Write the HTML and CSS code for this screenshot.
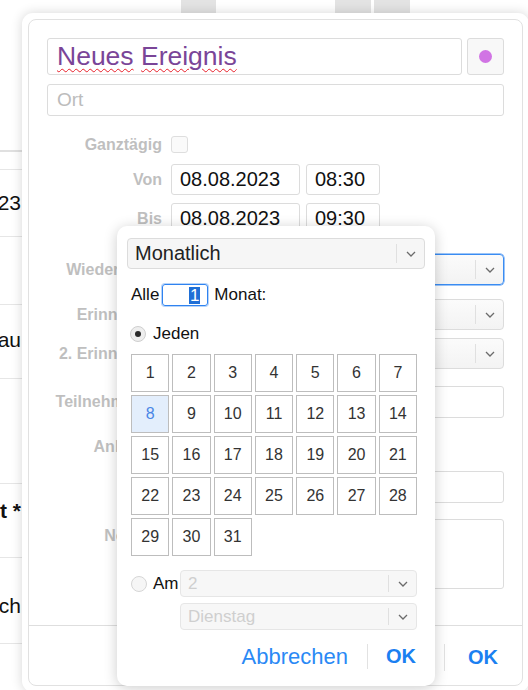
FILE: index.html
```html
<!DOCTYPE html>
<html lang="de">
<head>
<meta charset="utf-8">
<title>Neues Ereignis</title>
<link rel="stylesheet" href="styles.css">
</head>
<body>
<div class="desk">
  <div class="topbar">
    <div class="tab tab-a"></div>
    <div class="tab tab-b"></div>
    <div class="tab tab-c"></div>
  </div>
  <div class="list">
    <div class="list-head"></div>
    <div class="lrow r1"></div>
    <div class="lrow r2"><span>08.08.2023</span></div>
    <div class="lrow r3"></div>
    <div class="lrow r4"><span>Genau</span></div>
    <div class="lrow r5"></div>
    <div class="lrow r6"><span class="strong">Inhalt *</span></div>
    <div class="lrow r7"><span>Deutsch</span></div>
  </div>
</div>

<div class="dialog">
  <div class="panel">
    <div class="pbody">
      <div class="titlerow">
        <div class="title-input"><span class="spell">Neues</span> <span class="spell">Ereignis</span></div>
        <div class="color-btn"><span class="dot"></span></div>
      </div>
      <div class="ort-input">Ort</div>

      <div class="frow row-allday">
        <div class="flabel">Ganztägig</div>
        <div class="fctrl"><span class="checkbox"></span></div>
      </div>
      <div class="frow row-von">
        <div class="flabel">Von</div>
        <div class="fctrl">
          <div class="inp date">08.08.2023</div>
          <div class="inp time">08:30</div>
        </div>
      </div>
      <div class="frow row-bis">
        <div class="flabel">Bis</div>
        <div class="fctrl">
          <div class="inp date">08.08.2023</div>
          <div class="inp time">09:30</div>
        </div>
      </div>
      <div class="frow row-rep">
        <div class="flabel">Wiederholen</div>
        <div class="fctrl">
          <div class="msel focus"><span class="msel-text">Monatlich</span><span class="msel-btn"><svg width="10" height="6" viewBox="0 0 10 6"><polyline points="1,1 5,5 9,1" fill="none" stroke="#6b6b6b" stroke-width="1.3"/></svg></span></div>
        </div>
      </div>
      <div class="frow row-rem1">
        <div class="flabel">Erinnerung</div>
        <div class="fctrl">
          <div class="msel"><span class="msel-text">Keine</span><span class="msel-btn"><svg width="10" height="6" viewBox="0 0 10 6"><polyline points="1,1 5,5 9,1" fill="none" stroke="#6b6b6b" stroke-width="1.3"/></svg></span></div>
        </div>
      </div>
      <div class="frow row-rem2">
        <div class="flabel">2. Erinnerung</div>
        <div class="fctrl">
          <div class="msel"><span class="msel-text">Keine</span><span class="msel-btn"><svg width="10" height="6" viewBox="0 0 10 6"><polyline points="1,1 5,5 9,1" fill="none" stroke="#6b6b6b" stroke-width="1.3"/></svg></span></div>
        </div>
      </div>
      <div class="frow row-part">
        <div class="flabel">Teilnehmende</div>
        <div class="fctrl"><div class="inp wide"></div></div>
      </div>
      <div class="frow row-att">
        <div class="flabel">Anhänge</div>
        <div class="fctrl"><div class="attbtn">Hinzufügen</div></div>
      </div>
      <div class="frow row-url">
        <div class="flabel"></div>
        <div class="fctrl"><div class="inp wide"></div></div>
      </div>
      <div class="frow row-notes">
        <div class="flabel">Notizen</div>
        <div class="fctrl"><div class="textarea"></div></div>
      </div>
    </div>
    <div class="pfoot">
      <span class="btn">Abbrechen</span>
      <span class="sep"></span>
      <span class="btn ok">OK</span>
    </div>
  </div>
</div>

<div class="popup">
  <div class="psel"><span class="psel-text">Monatlich</span><span class="psel-btn"><svg width="10" height="6" viewBox="0 0 10 6"><polyline points="1,1 5,5 9,1" fill="none" stroke="#6b6b6b" stroke-width="1.3"/></svg></span></div>
  <div class="every">
    <span>Alle</span>
    <span class="num-input"><span class="selected">1</span></span>
    <span class="every-unit">Monat:</span>
  </div>
  <div class="radio-row">
    <span class="radio checked"></span>
    <span class="radio-label">Jeden</span>
  </div>
  <div class="days">
    <div class="day">1</div><div class="day">2</div><div class="day">3</div><div class="day">4</div><div class="day">5</div><div class="day">6</div><div class="day">7</div>
    <div class="day active">8</div><div class="day">9</div><div class="day">10</div><div class="day">11</div><div class="day">12</div><div class="day">13</div><div class="day">14</div>
    <div class="day">15</div><div class="day">16</div><div class="day">17</div><div class="day">18</div><div class="day">19</div><div class="day">20</div><div class="day">21</div>
    <div class="day">22</div><div class="day">23</div><div class="day">24</div><div class="day">25</div><div class="day">26</div><div class="day">27</div><div class="day">28</div>
    <div class="day">29</div><div class="day">30</div><div class="day">31</div>
  </div>
  <div class="am">
    <div class="am-left">
      <span class="radio"></span>
      <span class="radio-label">Am</span>
    </div>
    <div class="am-right">
      <div class="dsel"><span class="dsel-text">2</span><span class="dsel-btn"><svg width="10" height="6" viewBox="0 0 10 6"><polyline points="1,1 5,5 9,1" fill="none" stroke="#6b6b6b" stroke-width="1.3"/></svg></span></div>
      <div class="dsel"><span class="dsel-text">Dienstag</span><span class="dsel-btn"><svg width="10" height="6" viewBox="0 0 10 6"><polyline points="1,1 5,5 9,1" fill="none" stroke="#6b6b6b" stroke-width="1.3"/></svg></span></div>
    </div>
  </div>
  <div class="popfoot">
    <span class="btn">Abbrechen</span>
    <span class="sep"></span>
    <span class="btn ok">OK</span>
  </div>
</div>
</body>
</html>
```

FILE: styles.css
```css
html, body {
  margin: 0;
  padding: 0;
}
body {
  width: 528px;
  height: 690px;
  overflow: hidden;
  position: relative;
  background: #ffffff;
  font-family: "Liberation Sans", Arial, Helvetica, sans-serif;
  color: #111;
}

/* ---------- background page ---------- */
.topbar {
  display: flex;
  height: 40px;
}
.tab {
  height: 40px;
  background: #e3e3e3;
}
.tab-a { margin-left: 181px; width: 35px; }
.tab-b { margin-left: 119px; width: 36px; }
.tab-c { margin-left: 3px; width: 36px; }

.list {
  width: 22px;
  overflow: hidden;
}
.list-head {
  height: 110px;
  border-bottom: 2px solid #e0e0e0;
}
.lrow {
  display: flex;
  justify-content: flex-end;
  align-items: center;
  border-bottom: 1px solid #e6e6e6;
  white-space: nowrap;
  font-size: 21px;
  color: #111;
  padding-right: 1px;
}
.lrow span { flex: none; }
.lrow .strong { font-weight: bold; }
.r1 { height: 17px; }
.r2 { height: 66px; }
.r3 { height: 67px; }
.r4 { padding-bottom: 4px; height: 69px; }
.r5 { height: 104px; }
.r6 { align-items: flex-start; padding-top: 15px; height: 58px; }
.r7 { padding-top: 10px; height: 75px; }

/* ---------- main dialog ---------- */
.dialog {
  position: absolute;
  left: 22px;
  top: 13px;
  width: 507px;
  height: 679px;
  box-sizing: border-box;
  padding: 6px;
  background: #fff;
  border-radius: 11px;
  box-shadow: 0 0 12px rgba(0, 0, 0, 0.16);
}
.panel {
  height: 100%;
  box-sizing: border-box;
  border: 1px solid #e1e1e1;
  border-radius: 8px;
  display: flex;
  flex-direction: column;
}
.pbody {
  padding: 18px 18px 0 18px;
}
.titlerow {
  display: flex;
  gap: 5px;
}
.title-input {
  flex: 1;
  height: 37px;
  box-sizing: border-box;
  border: 1px solid #dcdcdc;
  border-radius: 3px;
  padding-left: 9px;
  font-size: 26.5px;
  line-height: 35px;
  color: #7a4598;
  white-space: nowrap;
}
.spell {
  text-decoration: underline wavy #e8202a;
  text-decoration-thickness: 1px;
  text-underline-offset: 3px;
}
.color-btn {
  width: 37px;
  height: 37px;
  box-sizing: border-box;
  border: 1px solid #dcdcdc;
  border-radius: 3px;
  background: #f8f8f8;
  display: flex;
  align-items: center;
  justify-content: center;
}
.dot {
  width: 13px;
  height: 13px;
  border-radius: 50%;
  background: #d174e4;
}
.ort-input {
  margin-top: 9px;
  height: 32px;
  box-sizing: border-box;
  border: 1px solid #dcdcdc;
  border-radius: 3px;
  padding-left: 9px;
  font-size: 19px;
  line-height: 30px;
  color: #bcbcbc;
}

.frow {
  display: flex;
  align-items: center;
}
.flabel {
  width: 115px;
  flex: none;
  text-align: right;
  font-size: 16px;
  font-weight: bold;
  color: #bfbfbf;
  white-space: nowrap;
}
.fctrl {
  flex: 1;
  margin-left: 9px;
  display: flex;
  gap: 6px;
  align-items: center;
}
.row-allday { margin-top: 20px; height: 17px; }
.row-von { margin-top: 11px; }
.row-bis { margin-top: 8px; }
.row-rep { margin-top: 20px; }
.row-rem1 { margin-top: 14px; }
.row-rem2 { margin-top: 8px; }
.row-part { margin-top: 17px; }
.row-att { margin-top: 13px; }
.row-url { margin-top: 8px; }
.row-notes { margin-top: 16px; align-items: flex-start; }
.row-notes .flabel { padding-top: 8px; }

.checkbox {
  width: 17px;
  height: 17px;
  box-sizing: border-box;
  border: 1px solid #dedede;
  border-radius: 3px;
  background: #fafafa;
}
.inp {
  height: 31px;
  box-sizing: border-box;
  border: 1px solid #dcdcdc;
  border-radius: 3px;
  padding-left: 8px;
  font-size: 20px;
  line-height: 29px;
  color: #111;
  background: #fff;
}
.inp.date { width: 129px; }
.inp.time { width: 74px; }
.inp.wide { flex: 1; height: 32px; }
.attbtn {
  height: 32px;
  width: 150px;
  box-sizing: border-box;
  border: 1px solid #dcdcdc;
  border-radius: 3px;
  font-size: 16px;
  line-height: 30px;
  text-align: center;
  color: #555;
  background: #f7f7f7;
}
.textarea {
  flex: 1;
  height: 70px;
  box-sizing: border-box;
  border: 1px solid #dcdcdc;
  border-radius: 3px;
}
.msel {
  flex: 1;
  height: 31px;
  box-sizing: border-box;
  border: 1px solid #dcdcdc;
  border-radius: 4px;
  background: linear-gradient(#fbfbfb, #f3f3f3);
  display: flex;
  align-items: center;
  font-size: 18px;
  color: #222;
}
.msel.focus {
  border-color: #3a8cf2;
  box-shadow: 0 0 0 0.5px #3a8cf2;
}
.msel-text {
  flex: 1;
  padding-left: 8px;
}
.msel-btn,
.psel-btn,
.dsel-btn {
  width: 27px;
  height: 19px;
  flex: none;
  border-left: 1px solid #e0e0e0;
  display: flex;
  align-items: center;
  justify-content: center;
}
.msel-btn svg,
.psel-btn svg,
.dsel-btn svg {
  display: block;
}

.pfoot {
  margin-top: auto;
  height: 60px;
  box-sizing: border-box;
  border-top: 1px solid #dedede;
  padding-top: 4px;
  padding-right: 24px;
  display: flex;
  justify-content: flex-end;
  align-items: center;
}
.btn {
  font-size: 22px;
  color: #2a89f5;
}
.btn.ok {
  font-size: 20px;
  font-weight: bold;
  color: #1b80f1;
}
.sep {
  width: 1px;
  height: 27px;
  background: #e2e2e2;
}
.pfoot .sep { margin: 0 23px; }

/* ---------- recurrence popup ---------- */
.popup {
  position: absolute;
  left: 117px;
  top: 226px;
  width: 318px;
  height: 460px;
  box-sizing: border-box;
  padding: 12px 10px 0 10px;
  background: #fff;
  border-radius: 10px;
  box-shadow: 0 2px 14px rgba(0, 0, 0, 0.2);
  display: flex;
  flex-direction: column;
}
.psel {
  height: 31px;
  box-sizing: border-box;
  border: 1px solid #dcdcdc;
  border-radius: 4px;
  background: #f6f6f6;
  display: flex;
  align-items: center;
  font-size: 20px;
  color: #222;
}
.psel-text {
  flex: 1;
  padding-left: 7px;
}
.psel-btn { width: 27px; }

.every {
  margin-top: 15px;
  padding-left: 4px;
  height: 22px;
  display: flex;
  align-items: center;
  font-size: 17px;
  color: #111;
}
.num-input {
  margin-left: 3px;
  width: 46px;
  height: 22px;
  box-sizing: border-box;
  border: 1px solid #2f83f0;
  box-shadow: 0 0 0 1px rgba(47, 131, 240, 0.35);
  border-radius: 3px;
  display: flex;
  justify-content: flex-end;
  align-items: center;
  padding-right: 7px;
}
.selected {
  background: #1f6fd6;
  color: #fff;
  line-height: 17px;
  padding: 0 1px;
}
.every-unit { margin-left: 6px; }

.radio-row {
  margin-top: 18px;
  padding-left: 3px;
  display: flex;
  align-items: center;
}
.radio {
  width: 16px;
  height: 16px;
  flex: none;
  box-sizing: border-box;
  border: 1px solid #d6d6d6;
  border-radius: 50%;
  background: #f6f6f6;
  position: relative;
}
.radio.checked {
  background: #eeeeee;
  border-color: #cfcfcf;
}
.radio.checked::after {
  content: "";
  position: absolute;
  left: 4px;
  top: 4px;
  width: 6px;
  height: 6px;
  border-radius: 50%;
  background: #2b2b2b;
}
.radio-label {
  margin-left: 7px;
  font-size: 17px;
  color: #111;
}

.days {
  margin: 10px 8px 0 4px;
  display: grid;
  grid-template-columns: repeat(7, 1fr);
  grid-auto-rows: 38px;
  gap: 3px;
}
.day {
  box-sizing: border-box;
  border: 1px solid #bdbdbd;
  display: flex;
  align-items: center;
  justify-content: center;
  font-size: 16px;
  color: #333;
}
.day.active {
  background: #e3eefc;
  color: #4a86e6;
}

.am {
  margin: 14px 8px 0 4px;
  display: flex;
  align-items: flex-start;
}
.am-left {
  height: 27px;
  display: flex;
  align-items: center;
}
.am-left .radio-label { margin-left: 6px; }
.am-right {
  margin-left: auto;
  width: 237px;
  display: flex;
  flex-direction: column;
  gap: 6px;
}
.dsel {
  height: 27px;
  box-sizing: border-box;
  border: 1px solid #e6e6e6;
  border-radius: 4px;
  background: #f7f7f7;
  display: flex;
  align-items: center;
  font-size: 17px;
  color: #cfcfcf;
}
.dsel-text {
  flex: 1;
  padding-left: 7px;
}
.dsel-btn { width: 27px; height: 17px; }

.popfoot {
  margin-top: 13px;
  margin-right: 9px;
  height: 27px;
  display: flex;
  justify-content: flex-end;
  align-items: center;
}
.popfoot .sep { margin: 0 18px 0 19px; height: 25px; }
```
